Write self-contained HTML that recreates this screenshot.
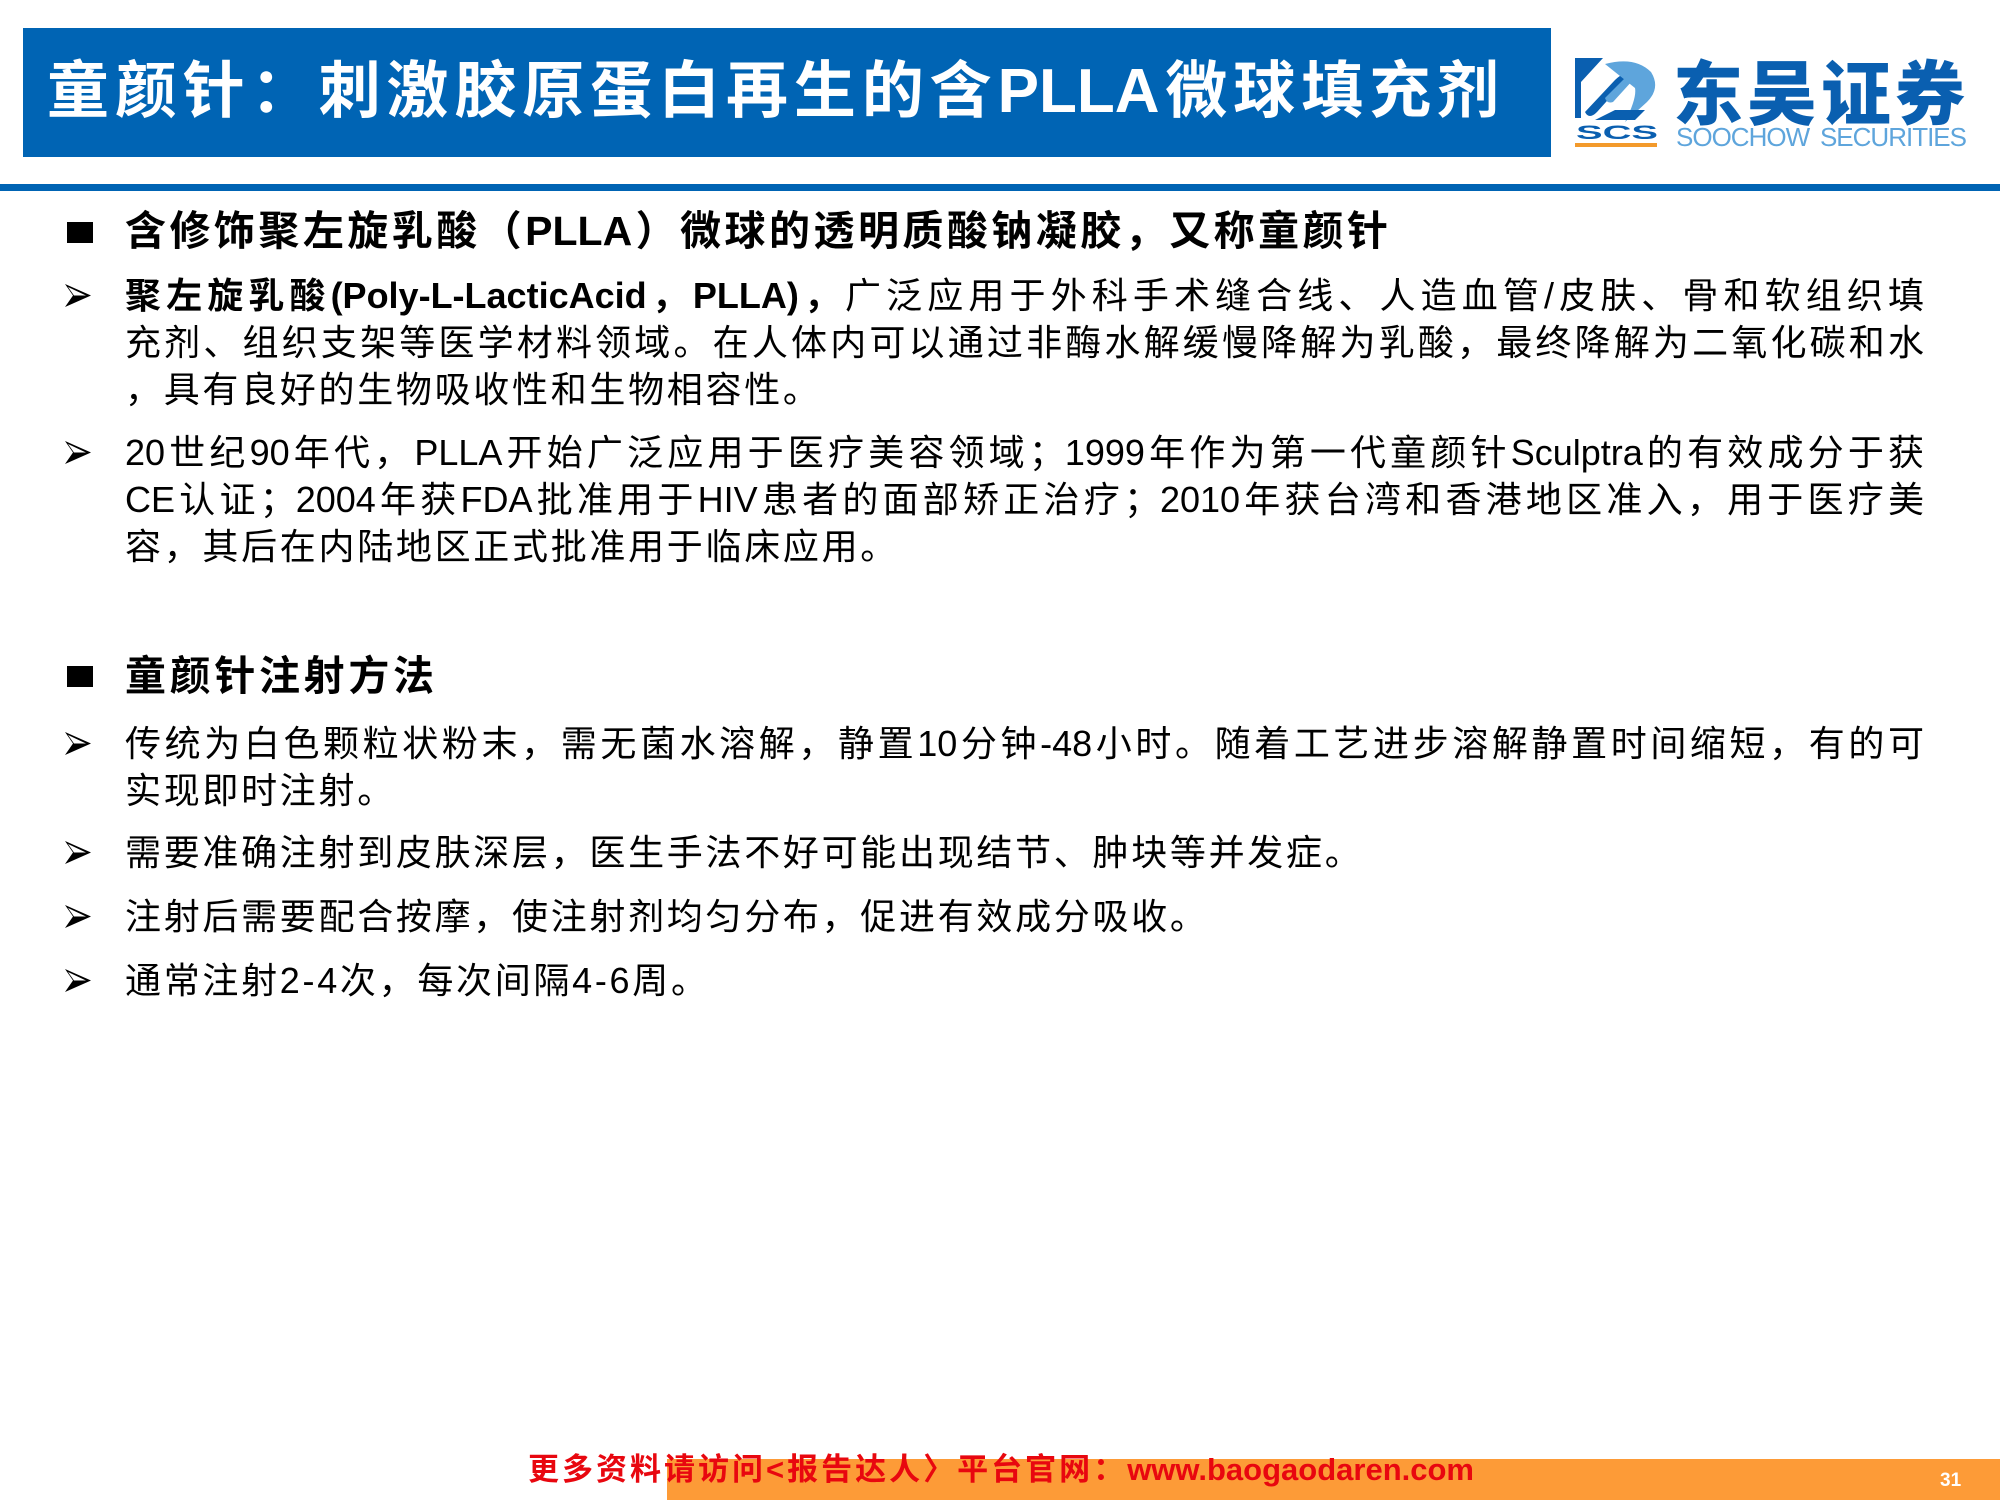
<!DOCTYPE html>
<html><head><meta charset="utf-8"><style>
*{margin:0;padding:0}
body{width:2000px;height:1500px;position:relative;background:#fff;overflow:hidden;font-family:"Liberation Sans","Noto Sans CJK SC",sans-serif;color:#000}
.hdr{position:absolute;left:23px;top:28px;width:1528px;height:129px;background:#0064b4}
.hdr div{position:absolute;left:24px;top:26px;width:1452px;color:#fff;font-weight:bold;font-size:62px;line-height:76px;white-space:nowrap;text-align:justify;text-align-last:justify}
.line{position:absolute;left:0;top:184px;width:2000px;height:7px;background:#0064b4}
.h{position:absolute;left:125px;font-weight:bold;font-size:41px;line-height:50px;white-space:nowrap;text-align:justify;text-align-last:justify}
.sq{position:absolute;left:67px;width:26px;height:21px;background:#000}
.t{position:absolute;left:125px;width:1799px;font-size:36px;line-height:47px;white-space:nowrap;text-align:justify;text-align-last:justify}
.t.l{text-align-last:left;letter-spacing:2.7px}
.ar{position:absolute;left:65px;width:26px;height:23px}
</style></head><body>
<div class="hdr"><div>童颜针：刺激胶原蛋白再生的含PLLA微球填充剂</div></div>
<svg style="position:absolute;left:1575px;top:58px" width="84" height="90" viewBox="0 0 84 90">
<path d="M0 0H28L6 24V60H0Z" fill="#0a5fb0"/>
<path d="M10 54L40 22Q48 14 58 14L22 54Q14 62 10 54Z" fill="#0a5fb0"/>
<path d="M30 6Q60 -2 76 14Q86 30 72 44L50 64Q62 40 60 30Z" fill="#5ea5dc"/>
<path d="M30 40L50 20Q56 16 58 22L38 44Q32 46 30 40Z" fill="#5ea5dc"/>
<path d="M20 62L60 62L70 52L40 52Z" fill="#0a5fb0"/>
<text x="42" y="81" text-anchor="middle" font-family="Liberation Sans" font-weight="bold" font-size="19" fill="#0a5fb0" textLength="82" lengthAdjust="spacingAndGlyphs">SCS</text>
<rect x="0" y="85" width="82" height="4" fill="#f39a2b"/>
</svg>
<div style="position:absolute;left:1673px;top:50px;font-family:'Noto Sans CJK SC',sans-serif;font-weight:900;font-size:70px;line-height:80px;color:#0a5fb0;letter-spacing:4px;white-space:nowrap">东吴证券</div>
<div style="position:absolute;left:1676px;top:122px;width:290px;font-size:26px;line-height:30px;color:#5ea5dc;white-space:nowrap;text-align:justify;text-align-last:justify;letter-spacing:-1px">SOOCHOW SECURITIES</div>
<div class="line"></div>

<div class="sq" style="top:222px"></div>
<div class="h" style="top:206px;width:1263px">含修饰聚左旋乳酸（PLLA）微球的透明质酸钠凝胶，又称童颜针</div>

<svg class="ar" style="top:284px" viewBox="0 0 26 23"><path d="M0 0L26 11.5L0 23L8 11.5Z" fill="#000"/><path d="M3 3L21 11.5L9 11.5Z" fill="#fff"/></svg>
<div class="t" style="top:272px"><b>聚左旋乳酸(Poly-L-LacticAcid，PLLA)，</b>广泛应用于外科手术缝合线、人造血管/皮肤、骨和软组织填</div>
<div class="t" style="top:319px">充剂、组织支架等医学材料领域。在人体内可以通过非酶水解缓慢降解为乳酸，最终降解为二氧化碳和水</div>
<div class="t l" style="top:366px">，具有良好的生物吸收性和生物相容性。</div>

<svg class="ar" style="top:441px" viewBox="0 0 26 23"><path d="M0 0L26 11.5L0 23L8 11.5Z" fill="#000"/><path d="M3 3L21 11.5L9 11.5Z" fill="#fff"/></svg>
<div class="t" style="top:429px">20世纪90年代，PLLA开始广泛应用于医疗美容领域；1999年作为第一代童颜针Sculptra的有效成分于获</div>
<div class="t" style="top:476px">CE认证；2004年获FDA批准用于HIV患者的面部矫正治疗；2010年获台湾和香港地区准入，用于医疗美</div>
<div class="t l" style="top:523px">容，其后在内陆地区正式批准用于临床应用。</div>

<div class="sq" style="top:666px"></div>
<div class="h" style="top:651px;width:309px">童颜针注射方法</div>

<svg class="ar" style="top:732px" viewBox="0 0 26 23"><path d="M0 0L26 11.5L0 23L8 11.5Z" fill="#000"/><path d="M3 3L21 11.5L9 11.5Z" fill="#fff"/></svg>
<div class="t" style="top:720px">传统为白色颗粒状粉末，需无菌水溶解，静置10分钟-48小时。随着工艺进步溶解静置时间缩短，有的可</div>
<div class="t l" style="top:767px">实现即时注射。</div>
<svg class="ar" style="top:841px" viewBox="0 0 26 23"><path d="M0 0L26 11.5L0 23L8 11.5Z" fill="#000"/><path d="M3 3L21 11.5L9 11.5Z" fill="#fff"/></svg>
<div class="t l" style="top:829px">需要准确注射到皮肤深层，医生手法不好可能出现结节、肿块等并发症。</div>
<svg class="ar" style="top:905px" viewBox="0 0 26 23"><path d="M0 0L26 11.5L0 23L8 11.5Z" fill="#000"/><path d="M3 3L21 11.5L9 11.5Z" fill="#fff"/></svg>
<div class="t l" style="top:893px">注射后需要配合按摩，使注射剂均匀分布，促进有效成分吸收。</div>
<svg class="ar" style="top:969px" viewBox="0 0 26 23"><path d="M0 0L26 11.5L0 23L8 11.5Z" fill="#000"/><path d="M3 3L21 11.5L9 11.5Z" fill="#fff"/></svg>
<div class="t l" style="top:957px">通常注射2-4次，每次间隔4-6周。</div>

<div style="position:absolute;left:667px;top:1459px;width:1333px;height:41px;background:#fd9b37"></div>
<div style="position:absolute;left:528px;top:1452px;width:946px;font-weight:bold;font-size:31px;line-height:36px;color:#e8070f;white-space:nowrap;text-align:justify;text-align-last:justify">更多资料请访问&lt;报告达人〉平台官网：www.baogaodaren.com</div>
<div style="position:absolute;left:1940px;top:1470px;font-weight:bold;font-size:19px;line-height:22px;color:#fff">31</div>
</body></html>
